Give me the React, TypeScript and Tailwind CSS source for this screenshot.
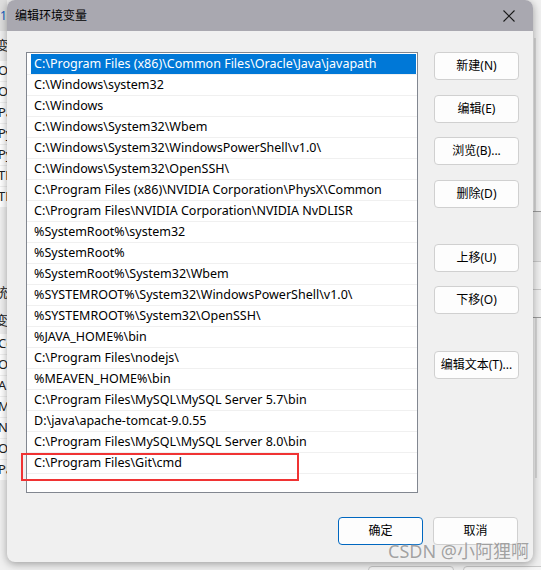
import React from 'react';

const paths = [
  'C:\\Program Files (x86)\\Common Files\\Oracle\\Java\\javapath',
  'C:\\Windows\\system32',
  'C:\\Windows',
  'C:\\Windows\\System32\\Wbem',
  'C:\\Windows\\System32\\WindowsPowerShell\\v1.0\\',
  'C:\\Windows\\System32\\OpenSSH\\',
  'C:\\Program Files (x86)\\NVIDIA Corporation\\PhysX\\Common',
  'C:\\Program Files\\NVIDIA Corporation\\NVIDIA NvDLISR',
  '%SystemRoot%\\system32',
  '%SystemRoot%',
  '%SystemRoot%\\System32\\Wbem',
  '%SYSTEMROOT%\\System32\\WindowsPowerShell\\v1.0\\',
  '%SYSTEMROOT%\\System32\\OpenSSH\\',
  '%JAVA_HOME%\\bin',
  'C:\\Program Files\\nodejs\\',
  '%MEAVEN_HOME%\\bin',
  'C:\\Program Files\\MySQL\\MySQL Server 5.7\\bin',
  'D:\\java\\apache-tomcat-9.0.55',
  'C:\\Program Files\\MySQL\\MySQL Server 8.0\\bin',
  'C:\\Program Files\\Git\\cmd',
  '',
];

// rows of the window behind the dialog that peek out on the left edge
const userVars = ['O', 'O', 'Pa', 'Py', 'Py', 'TE', 'TM'];
const sysVars = ['Co', 'O', 'A', 'M', 'N', 'O', 'Pa'];

const font = { fontFamily: '"Noto Sans", "Noto Sans CJK SC", sans-serif' };

function Btn({ label, primary }: { label: string; primary?: boolean }) {
  return (
    <div
      className={`w-[85px] h-[28px] flex items-center justify-center rounded-[4px] bg-[#fdfdfd] text-[12px] text-black ${
        primary ? 'border border-[#0067c0]' : 'border border-[#d0d0d0]'
      }`}
    >
      {label}
    </div>
  );
}

function PeekRows({ items }: { items: string[] }) {
  return (
    <div className="flex flex-col bg-white">
      {items.map((t, i) => (
        <div key={i} className="h-[21px] flex items-center border-b border-[#f0f0f0] -ml-[2px] text-[13px] text-[#202020]">
          {t}
        </div>
      ))}
    </div>
  );
}

export default function App() {
  return (
    <div className="relative w-[541px] h-[570px] overflow-hidden bg-[#d4d4d4]" style={font}>
      {/* window behind */}
      <div className="absolute inset-0 bg-[#f0f0f0] flex">
        <div className="w-[7px] shrink-0 overflow-hidden flex flex-col">
          <div className="h-[31px] bg-[#dedede] flex items-center text-[12px] text-[#1060c0]">1</div>
          <div className="h-[30px] flex items-center -ml-[4px] text-[13px] text-[#202020]">变</div>
          <PeekRows items={userVars} />
          <div className="h-[70px]" />
          <div className="h-[30px] flex items-center -ml-[5px] text-[13px] text-[#202020]">统</div>
          <div className="h-[26px] flex items-center -ml-[5px] text-[13px] text-[#202020]">变</div>
          <PeekRows items={sysVars} />
        </div>
        <div className="flex-1" />
        <div className="w-[8px] shrink-0 flex flex-col pt-[38px]">
          <div className="h-[173px] w-[2px] ml-[1px] bg-[#d6d6d6]" />
          <div className="h-[1px] bg-[#9a9a9a]" />
          <div className="h-[50px] bg-[#e4e4e4] border-b border-[#c8c8c8]" />
          <div className="h-[28px] border-b border-[#c8c8c8]" />
          <div className="h-[28px] border-b border-[#9a9a9a]" />
          <div className="h-[160px] w-[2px] ml-[2px] bg-[#d6d6d6]" />
        </div>
      </div>
      <div className="absolute left-[368px] top-[566px] flex gap-[9px]">
        <div className="w-[86px] h-[10px] rounded-[4px] border border-[#c8c8c8] bg-[#f6f6f6]" />
        <div className="w-[86px] h-[10px] rounded-[4px] border border-[#c8c8c8] bg-[#f6f6f6]" />
      </div>

      {/* dialog */}
      <div className="absolute left-[7px] top-0 w-[526px] h-[562px] rounded-[8px] bg-[#f0f0f0] shadow-[0_2px_8px_rgba(0,0,0,0.35)] flex flex-col overflow-hidden">
        <div className="h-[31px] shrink-0 bg-[#a9a8b0] flex items-center justify-between pl-[8px] pr-[18px]">
          <span className="text-[12px] text-black">编辑环境变量</span>
          <svg width="12" height="12" viewBox="0 0 12 12" className="text-[#1a1a1a]">
            <path d="M0.5 0.5 L11.5 11.5 M11.5 0.5 L0.5 11.5" stroke="currentColor" strokeWidth="1.1" fill="none" />
          </svg>
        </div>

        <div className="flex pl-[19px] pt-[21px]">
          <div className="w-[392px] h-[441px] shrink-0 bg-white border border-[#828790] pt-[1px] overflow-hidden">
            {paths.map((p, i) => (
              <div key={i} className="h-[21px] border-b border-[#f0f0f0] flex">
                <div
                  className={`flex-1 ml-[4px] mr-[1px] flex items-center pl-[3px] pt-[1px] text-[12.5px] whitespace-nowrap ${
                    i === 0 ? 'bg-[#0078d7] text-white' : 'text-black'
                  }`}
                >
                  {p}
                </div>
              </div>
            ))}
          </div>

          <div className="flex flex-col ml-[16px]">
            <Btn label="新建(N)" />
            <div className="mt-[15px]"><Btn label="编辑(E)" /></div>
            <div className="mt-[14px]"><Btn label="浏览(B)..." /></div>
            <div className="mt-[15px]"><Btn label="删除(D)" /></div>
            <div className="mt-[36px]"><Btn label="上移(U)" /></div>
            <div className="mt-[14px]"><Btn label="下移(O)" /></div>
            <div className="mt-[37px]"><Btn label="编辑文本(T)..." /></div>
          </div>
        </div>

        <div className="flex justify-end gap-[10px] pr-[15px] mt-[24px]">
          <Btn label="确定" primary />
          <Btn label="取消" />
        </div>
      </div>

      {/* annotation box */}
      <div className="absolute left-[21px] top-[453px] w-[278px] h-[28px] border-2 border-[#f03333]" />

      {/* watermark */}
      <div className="absolute left-[388px] top-[542px] text-[18px] leading-none text-[#9a9a9a] opacity-90 [text-shadow:0_0_2px_rgba(255,255,255,0.8)]">
        CSDN @小阿狸啊
      </div>
    </div>
  );
}
